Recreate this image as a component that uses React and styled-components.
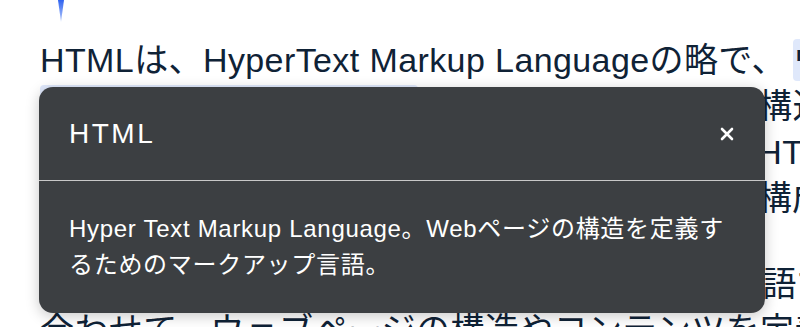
import React from 'react';
import styled, { createGlobalStyle } from 'styled-components';

const GlobalStyle = createGlobalStyle`
  html, body {
    margin: 0;
    padding: 0;
    background: #fff;
    overflow: hidden;
  }
`;

const Page = styled.div`
  position: relative;
  width: 800px;
  height: 327px;
  overflow: hidden;
  padding-left: 40px;
  box-sizing: border-box;
  font-family: "Liberation Sans", "Noto Sans CJK JP", sans-serif;
`;

const TopMark = styled.div`
  height: 37px;
  padding-left: 17px;
`;

const Paragraph = styled.div`
  font-size: 34px;
  line-height: 46px;
  letter-spacing: 0.4px;
  color: #0f2236;
  margin-bottom: 40px;
`;

const Line = styled.div`
  white-space: nowrap;
`;

const Term = styled.span`
  background: #dfe8fb;
  border-radius: 4px;
  padding: 2px 0;
  margin-left: ${(p) => (p.$gap ? '7px' : '0')};
`;

const Popover = styled.div`
  position: absolute;
  top: 87px;
  left: 39px;
  width: 726px;
  height: 226px;
  box-sizing: border-box;
  background: #3c3f42;
  border-radius: 14px;
  box-shadow: 0 3px 14px rgba(0, 0, 0, 0.22);
  color: #fff;
  display: flex;
  flex-direction: column;
  overflow: hidden;
`;

const Header = styled.div`
  height: 93px;
  flex-shrink: 0;
  display: flex;
  align-items: center;
  justify-content: space-between;
  padding: 0 30px;
  border-bottom: 1px solid #c8c8c8;
`;

const Title = styled.div`
  font-size: 28px;
  letter-spacing: 2.5px;
`;

const Close = styled.button`
  display: flex;
  align-items: center;
  justify-content: center;
  background: none;
  border: none;
  padding: 0;
  margin-right: 1px;
  cursor: pointer;
`;

const Body = styled.div`
  padding: 30px 30px;
  font-size: 24px;
  line-height: 36px;
  letter-spacing: 0.7px;
`;

const Caret = () => (
  <svg width="8" height="22" viewBox="0 0 8 22">
    <defs>
      <linearGradient id="caretFill" x1="0" y1="0" x2="0" y2="1">
        <stop offset="0" stopColor="#2f63f0" />
        <stop offset="1" stopColor="#b7cbfb" />
      </linearGradient>
    </defs>
    <polygon points="1,0 7,0 4,22" fill="url(#caretFill)" />
  </svg>
);

const CloseIcon = () => (
  <svg width="14" height="14" viewBox="0 0 14 14">
    <path d="M2 2 L12 12 M12 2 L2 12" stroke="#fff" strokeWidth="2.6" strokeLinecap="round" />
  </svg>
);

const App = () => {
  return (
    <>
      <GlobalStyle />
      <Page>
        <TopMark>
          <Caret />
        </TopMark>
        <Paragraph>
          <Line>HTMLは、HyperText Markup Languageの略で、<Term $gap>ウェブ</Term></Line>
          <Line><Term>ページを作るための言語</Term>です。文書の見出しや構造を記述します。</Line>
          <Line>を記述します。ブラウザはこの記述をもとに、HTML文書を表示します。</Line>
          <Line>文書を画面に表示します。ページは要素により構成されます。</Line>
        </Paragraph>
        <Paragraph>
          <Line>ウェブの制作では、スタイルを指定する別の言語であるCSSなどと組み</Line>
          <Line>合わせて、ウェブページの構造やコンテンツを定義します。</Line>
        </Paragraph>
        <Popover>
          <Header>
            <Title>HTML</Title>
            <Close aria-label="閉じる">
              <CloseIcon />
            </Close>
          </Header>
          <Body>
            Hyper Text Markup Language。Webページの構造を定義するためのマークアップ言語。
          </Body>
        </Popover>
      </Page>
    </>
  );
};

export default App;
